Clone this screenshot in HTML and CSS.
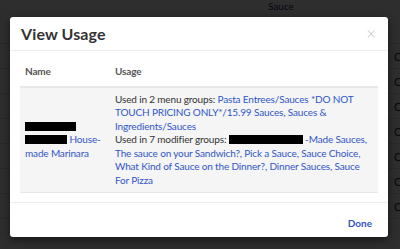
FILE: index.html
```
<!DOCTYPE html>
<html lang="en">
<head>
    <meta charset="UTF-8">
    <meta name="viewport" content="width=device-width, initial-scale=1.0">
    <title>View Usage</title>
    <link rel="stylesheet" href="styles.css">
</head>
<body>
    <!-- Page behind the modal -->
    <div class="page">
        <div class="page-head"><span class="page-col">Sauce</span></div>
        <div class="page-row"><span class="page-cell">C</span></div>
        <div class="page-row"><span class="page-cell">C</span></div>
        <div class="page-row"><span class="page-cell">C</span></div>
        <div class="page-row"><span class="page-cell">C</span></div>
        <div class="page-row"><span class="page-cell">C</span></div>
        <div class="page-row"><span class="page-cell">C</span></div>
        <div class="page-row"><span class="page-cell">C</span></div>
    </div>

    <div class="backdrop"></div>

    <div class="modal">
        <div class="modal-header">
            <h3>View Usage</h3>
            <span class="close">&times;</span>
        </div>
        <div class="modal-body">
            <table class="usage-table">
                <thead>
                    <tr>
                        <th class="col-name">Name</th>
                        <th>Usage</th>
                    </tr>
                </thead>
                <tbody>
                    <tr>
                        <td class="col-name">
                            <span class="redacted redacted-a"></span><br>
                            <span class="redacted redacted-b"></span> <a href="#">House-made Marinara</a>
                        </td>
                        <td>
                            Used in 2 menu groups: <a href="#">Pasta Entrees/Sauces *DO NOT TOUCH PRICING ONLY*/15.99 Sauces, Sauces &amp; Ingredients/Sauces</a><br>
                            Used in 7 modifier groups: <span class="redacted redacted-c"></span> <a href="#">-Made Sauces, The sauce on your Sandwich?, Pick a Sauce, Sauce Choice, What Kind of Sauce on the Dinner?, Dinner Sauces, Sauce For Pizza</a>
                        </td>
                    </tr>
                </tbody>
            </table>
        </div>
        <div class="modal-footer">
            <a href="#" class="done">Done</a>
        </div>
    </div>
</body>
</html>
```
FILE: styles.css
```
/* Basic styling */
* {
    margin: 0;
    padding: 0;
    box-sizing: border-box;
}

html, body {
    height: 249px;
    overflow: hidden;
}

body {
    font-family: 'Lato', 'Noto Sans', sans-serif;
    background-color: #fff;
    color: #333;
}

a {
    color: #2f55c9;
    text-decoration: none;
}

/* Page behind */
.page-head {
    height: 44px;
    padding-left: 268px;
    font-size: 10px;
    color: #1a2a6c;
    border-bottom: 1px solid #ddd;
}

.page-row {
    height: 25px;
    border-bottom: 1px solid #ddd;
    padding-left: 394px;
    font-size: 11px;
    line-height: 25px;
    overflow: hidden;
}

.backdrop {
    position: absolute;
    inset: 0;
    background-color: rgba(0, 0, 0, 0.82);
}

/* Modal */
.modal {
    position: absolute;
    left: 10px;
    top: 17px;
    width: 378px;
    height: 220px;
    background-color: #fff;
    border-radius: 3px;
    box-shadow: 0 3px 10px rgba(0, 0, 0, 0.5);
    display: flex;
    flex-direction: column;
}

.modal-header {
    height: 34px;
    padding: 0 11px;
    display: flex;
    align-items: center;
    justify-content: space-between;
    border-bottom: 1px solid #eee;
}

.modal-header h3 {
    font-size: 16px;
    font-weight: 700;
    color: #333;
    letter-spacing: 0.1px;
}

.close {
    font-size: 17px;
    color: #c4c4c4;
    font-weight: 300;
    margin-right: 1px;
}

.modal-body {
    flex: 1;
    padding: 0 10px;
}

.usage-table {
    width: 100%;
    border-collapse: collapse;
    font-size: 10px;
    line-height: 13.5px;
    letter-spacing: -0.15px;
}

.usage-table th {
    text-align: left;
    font-weight: 700;
    color: #555;
    padding: 14px 5px 7px;
    border-bottom: 2px solid #e8e8e8;
}

.usage-table td {
    background-color: #f5f5f5;
    padding: 5px 6px 5px 5px;
    vertical-align: top;
    border-bottom: 1px solid #e8e8e8;
}

.usage-table td.col-name {
    vertical-align: middle;
}

.col-name {
    width: 90px;
}

.redacted {
    display: inline-block;
    background-color: #000;
    height: 9px;
    vertical-align: -1px;
}

.redacted-a { width: 51px; }
.redacted-b { width: 42px; }
.redacted-c { width: 74px; }

.modal-footer {
    height: 35px;
    border-top: 1px solid #eee;
    display: flex;
    align-items: center;
    justify-content: flex-end;
    padding: 5px 16px 0;
}

.done {
    font-size: 10px;
    font-weight: 700;
}
```
